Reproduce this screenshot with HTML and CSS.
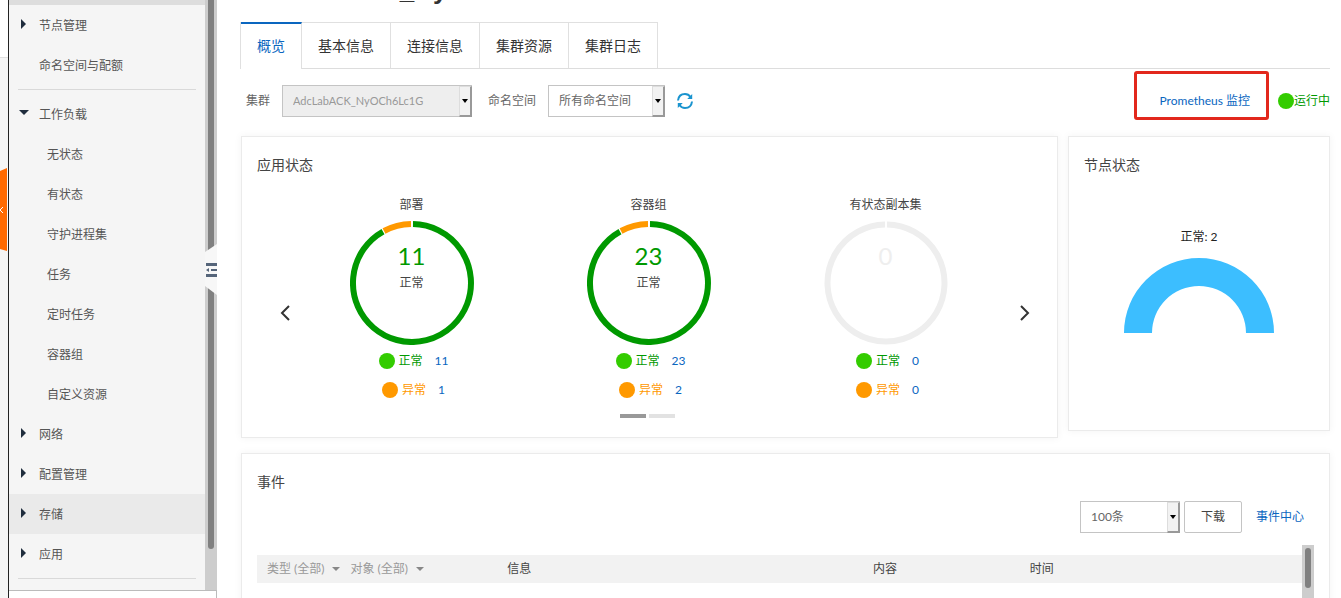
FILE: index.html
```html
<!DOCTYPE html>
<html lang="zh-CN">
<head>
<meta charset="utf-8">
<meta name="viewport" content="width=device-width, initial-scale=1">
<title>集群管理</title>
<link rel="stylesheet" href="styles.css">
</head>
<body>
<div class="shell">
  <div class="rail">
    <button class="rail-tab" type="button" aria-label="展开"><svg width="7" height="8" viewBox="0 0 7 8"><path d="M3 1L0 4l3 3" fill="none" stroke="#fff"/></svg></button>
  </div>
  <aside class="sidebar">
    <nav class="nav">
      <a class="item" href="#"><svg class="caret" viewBox="0 0 10 10"><path d="M2 0l5 5-5 5z"/></svg>节点管理</a>
      <a class="item" href="#"><span class="caret"></span>命名空间与配额</a>
      <hr>
      <a class="item" href="#"><svg class="caret" viewBox="0 0 10 10"><path d="M0 2h10l-5 5z"/></svg>工作负载</a>
      <a class="item sub" href="#">无状态</a>
      <a class="item sub" href="#">有状态</a>
      <a class="item sub" href="#">守护进程集</a>
      <a class="item sub" href="#">任务</a>
      <a class="item sub" href="#">定时任务</a>
      <a class="item sub" href="#">容器组</a>
      <a class="item sub" href="#">自定义资源</a>
      <a class="item" href="#"><svg class="caret" viewBox="0 0 10 10"><path d="M2 0l5 5-5 5z"/></svg>网络</a>
      <a class="item" href="#"><svg class="caret" viewBox="0 0 10 10"><path d="M2 0l5 5-5 5z"/></svg>配置管理</a>
      <a class="item hover" href="#"><svg class="caret" viewBox="0 0 10 10"><path d="M2 0l5 5-5 5z"/></svg>存储</a>
      <a class="item" href="#"><svg class="caret" viewBox="0 0 10 10"><path d="M2 0l5 5-5 5z"/></svg>应用</a>
      <hr>
    </nav>
    <div class="track"><div class="thumb"></div></div>
    <div class="status-strip"></div>
    <button class="collapse" type="button" aria-label="收起菜单"><svg width="11" height="14" viewBox="0 0 11 14"><path d="M0 0h11v3H0zM5 6h6v2H5zM0 11h11v3H0zM3 5v4L0 7z" fill="#56657a"/></svg></button>
  </aside>
  <main class="main">
    <h1 class="title">AdcLabACK_NyOCh6Lc1G</h1>
    <div class="tabs" role="tablist">
      <button class="tab active" type="button" role="tab" aria-selected="true">概览</button>
      <button class="tab" type="button" role="tab">基本信息</button>
      <button class="tab" type="button" role="tab">连接信息</button>
      <button class="tab" type="button" role="tab">集群资源</button>
      <button class="tab" type="button" role="tab">集群日志</button>
    </div>
    <div class="filters">
      <label for="cluster">集群</label>
      <div class="pick pick-cluster">
        <select id="cluster" disabled><option>AdcLabACK_NyOCh6Lc1G</option></select>
        <span class="drop"></span>
      </div>
      <label class="ns" for="namespace">命名空间</label>
      <div class="pick pick-ns">
        <select id="namespace"><option>所有命名空间</option></select>
        <span class="drop"></span>
      </div>
      <button class="refresh" type="button" aria-label="刷新"><svg width="16" height="16" viewBox="0 0 16 16"><g fill="none" stroke="#1a94cf" stroke-width="2"><path d="M1 7.500C1.500 3 4.500 1 8 1c2.500 0 4.300 1.200 5.500 3"/><path d="M15 8.500C14.500 13 11.500 15 8 15c-2.500 0-4.300-1.200-5.500-3"/></g><path d="M15.200 1v5h-5zM.8 15v-5h5z" fill="#1a94cf"/></svg></button>
      <a class="prometheus" href="#">Prometheus 监控</a>
      <span class="running"><i class="dot green"></i>运行中</span>
    </div>

    <div class="cards">
      <section class="card apps">
        <h2>应用状态</h2>
        <div class="carousel">
          <button class="arrow" type="button" aria-label="上一页"><svg width="12" height="18" viewBox="0 0 12 18"><path d="M10 2L3 9l7 7" fill="none" stroke="#333" stroke-width="2"/></svg></button>
          <div class="slides">
            <article class="slide">
              <h3>部署</h3>
              <div class="ring">
                <svg width="124" height="124" viewBox="-62 -62 124 124" fill="none" stroke-width="6"><path d="M1 -59A59 59 0 1 1 -29 -51.400" stroke="#090"/><path d="M-28 -52A59 59 0 0 1 -1 -59" stroke="#f90"/></svg>
                <div class="ring-text"><strong>11</strong><span>正常</span></div>
              </div>
              <p class="legend ok"><i class="dot green"></i>正常<a href="#">11</a></p>
              <p class="legend bad"><i class="dot orange"></i>异常<a href="#">1</a></p>
            </article>
            <article class="slide">
              <h3>容器组</h3>
              <div class="ring">
                <svg width="124" height="124" viewBox="-62 -62 124 124" fill="none" stroke-width="6"><path d="M1 -59A59 59 0 1 1 -29 -51.400" stroke="#090"/><path d="M-28 -52A59 59 0 0 1 -1 -59" stroke="#f90"/></svg>
                <div class="ring-text"><strong>23</strong><span>正常</span></div>
              </div>
              <p class="legend ok"><i class="dot green"></i>正常<a href="#">23</a></p>
              <p class="legend bad"><i class="dot orange"></i>异常<a href="#">2</a></p>
            </article>
            <article class="slide">
              <h3>有状态副本集</h3>
              <div class="ring empty">
                <svg width="124" height="124" viewBox="-62 -62 124 124" fill="none" stroke-width="6"><path d="M1 -58.500A58.500 58.500 0 1 1 -1 -58.500" stroke="#eee"/></svg>
                <div class="ring-text"><strong>0</strong></div>
              </div>
              <p class="legend ok"><i class="dot green"></i>正常<a href="#">0</a></p>
              <p class="legend bad"><i class="dot orange"></i>异常<a href="#">0</a></p>
            </article>
            <div class="pager"><i class="on"></i><i></i></div>
          </div>
          <button class="arrow" type="button" aria-label="下一页"><svg width="12" height="18" viewBox="0 0 12 18"><path d="M2 2l7 7-7 7" fill="none" stroke="#333" stroke-width="2"/></svg></button>
        </div>
      </section>
      <section class="card nodes">
        <h2>节点状态</h2>
        <p class="gauge-label">正常: 2</p>
        <svg class="gauge" width="150" height="75" viewBox="0 0 150 75"><path d="M0 75a75 75 0 0 1 150 0h-28a47 47 0 0 0-94 0z" fill="#3cbeff"/></svg>
      </section>
    </div>

    <section class="card events">
      <h2>事件</h2>
      <div class="toolbar">
        <div class="pick pick-count">
          <select aria-label="条数"><option>100条</option></select>
          <span class="drop"></span>
        </div>
        <button class="download" type="button">下载</button>
        <a href="#">事件中心</a>
      </div>
      <div class="table-area">
        <table>
          <colgroup><col class="c-kind"><col class="c-info"><col class="c-body"><col></colgroup>
          <thead>
            <tr>
              <th><button class="filter" type="button">类型 (全部)</button><button class="filter" type="button">对象 (全部)</button></th>
              <th>信息</th>
              <th>内容</th>
              <th>时间</th>
            </tr>
          </thead>
        </table>
        <div class="track"><div class="thumb"></div></div>
      </div>
    </section>
  </main>
</div>
</body>
</html>
```
FILE: styles.css
```css
* { box-sizing: border-box; }

body {
  margin: 0;
  overflow: hidden;
  background: #fff;
  color: #444;
  font: 12px/20px Lato, "Noto Sans CJK SC", sans-serif;
}

h1, h2, h3, p { margin: 0; font-weight: 400; }
a { color: #0a66bf; text-decoration: none; }
button { margin: 0; padding: 0; border: 0; background: none; color: inherit; font: inherit; cursor: pointer; }
svg { display: block; }

.shell {
  display: grid;
  grid-template-columns: 8px 209px minmax(0, 1fr);
  height: 100vh;
}

.rail {
  display: flex;
  align-items: flex-start;
  padding-top: 168px;
  background: linear-gradient(#fff 57px, #e0e0e0 57px, #e0e0e0 58px, #f5f5f5 58px);
}
.rail-tab {
  display: flex;
  align-items: center;
  width: 7px;
  height: 83px;
  background: #ff6a00;
  clip-path: polygon(0 3px, 100% 0, 100% 100%, 0 81px);
}

.sidebar {
  position: relative;
  display: grid;
  grid-template-columns: minmax(0, 1fr) 12px;
  grid-template-rows: minmax(0, 1fr) 8px;
  min-height: 0;
  border-left: 1px solid #222;
  background: #f5f5f5;
}
.nav { overflow: hidden; border-top: 5px solid #ddd; }
.nav hr { height: 1px; margin: 4px 9px; border: 0; background: #d9d9d9; }
.item {
  display: flex;
  align-items: center;
  gap: 10px;
  height: 40px;
  padding: 2px 0 0 10px;
  color: #555;
}
.item.sub { padding-left: 38px; }
.item.hover { background: #eaeaea; }
.caret { flex: none; width: 10px; height: 10px; margin-bottom: 4px; fill: #1f2d3d; }

.track { padding: 0 3px; background: #cdcdcd; }
.thumb { border-radius: 3px; background: #808080; }
.sidebar .thumb { height: 93%; border-radius: 0 0 3px 3px; }
.status-strip {
  grid-column: 1 / -1;
  border: 1px solid #bbb;
  border-width: 1px 1px 0 0;
  background: #fff;
}
.collapse {
  position: absolute;
  top: 244px;
  right: 0;
  display: flex;
  align-items: center;
  justify-content: flex-end;
  width: 12px;
  height: 51px;
  background: #f7f7f7;
  clip-path: polygon(0 8px, 100% 0, 100% 100%, 0 42px);
}

.main { min-height: 0; padding: 0 11px 0 24px; overflow: hidden; }

.title {
  margin: -22px 0 20px;
  padding-left: 7px;
  color: #333;
  font-family: "Liberation Sans", sans-serif;
  font-size: 26px;
  font-weight: 700;
  line-height: 24px;
}

.tabs { display: flex; border-bottom: 1px solid #ddd; }
.tab {
  height: 46px;
  padding: 0 16px;
  border: 1px solid #e0e0e0;
  border-width: 1px 1px 0 0;
  color: #333;
  font-size: 14px;
}
.tab.active {
  height: 47px;
  margin-bottom: -1px;
  padding-bottom: 2px;
  border-top: 2px solid #0a66bf;
  background: #fff;
  color: #0a66bf;
  box-shadow: -1px 0 #e0e0e0;
}

.filters {
  display: flex;
  align-items: center;
  padding: 16px 0 19px 5px;
  color: #666;
}
.pick { position: relative; height: 32px; }
.pick select {
  width: 100%;
  height: 100%;
  padding: 0 20px 0 10px;
  appearance: none;
  border: 1px solid #c4c4c4;
  border-radius: 0;
  background: #fff;
  color: #666;
  font: inherit;
}
.pick select:disabled { background: #eee; color: #999; font-size: 11px; opacity: 1; }
.drop {
  position: absolute;
  inset: 1px 0 0 auto;
  display: grid;
  place-items: center;
  width: 13px;
  border: 1px solid #ddd;
  border-right: 2px solid #999;
  border-bottom: 2px solid #999;
  background: #f2f2f2;
  pointer-events: none;
}
.drop::before {
  content: "";
  border: 3px solid transparent;
  border-top: 4px solid #000;
  border-bottom: 0;
}
.pick-cluster { width: 190px; margin-left: 12px; }
.ns { margin-left: 16px; }
.pick-ns { width: 117px; margin-left: 12px; }
.refresh { margin-left: 12px; }
.prometheus { position: relative; margin: 0 28px 0 auto; }
.prometheus::after {
  content: "";
  position: absolute;
  inset: -20px -19px -9px -26px;
  border: 3px solid #e2281c;
  border-radius: 3px;
}
.running { display: flex; align-items: center; color: #090; }

.dot { flex: none; width: 16px; height: 16px; border-radius: 50%; }
.green { background: #3c0; }
.orange { background: #f90; }

.cards {
  display: grid;
  grid-template-columns: minmax(0, 1fr) 262px;
  align-items: start;
  gap: 10px;
}
.card {
  padding: 14px 15px 15px;
  border: 1px solid #ebebeb;
  background: #fff;
  box-shadow: 0 0 8px rgba(0, 0, 0, .05);
}
.card h2 { font-size: 14px; line-height: 28px; }

.carousel {
  display: flex;
  align-items: center;
  padding: 16px 9px 0 22px;
}
.arrow { width: 14px; padding-top: 8px; }
.slides {
  display: grid;
  flex: 1;
  grid-template-columns: repeat(3, 1fr);
  margin-right: 15px;
  padding-bottom: 4px;
}
.slide { display: grid; justify-items: center; }
.slide h3 { margin-bottom: 6px; font-size: 12px; line-height: 20px; }
.ring { display: grid; margin-bottom: 6px; }
.ring > * { grid-area: 1 / 1; }
.ring-text {
  display: flex;
  flex-direction: column;
  align-items: center;
  padding-top: 18px;
}
.ring-text strong { color: #090; font-size: 24px; font-weight: 400; line-height: 34px; }
.empty .ring-text strong { color: #eee; }
.legend { display: flex; align-items: center; gap: 4px; margin-bottom: 9px; padding-left: 4px; }
.legend a { margin-left: 8px; }
.ok { color: #090; }
.bad { color: #f90; }
.pager {
  display: flex;
  grid-column: 1 / -1;
  justify-content: center;
  gap: 3px;
  padding: 5px 3px 0 0;
}
.pager i { width: 26px; height: 4px; background: #e2e2e2; }
.pager .on { background: #999; }

.nodes { min-height: 295px; }
.gauge-label { margin: 48px 0 11px; color: #222; text-align: center; }
.gauge { margin: 0 auto; }

.events { margin-top: 15px; padding-bottom: 0; }
.toolbar {
  display: flex;
  align-items: center;
  justify-content: flex-end;
  gap: 4px;
  padding: 5px 10px 12px 0;
}
.toolbar a { margin-left: 10px; }
.pick-count { width: 100px; }
.download { width: 58px; height: 32px; border: 1px solid #c4c4c4; border-radius: 2px; }

.table-area { display: flex; align-items: flex-start; height: 300px; }
.table-area .track { width: 12px; height: 100%; padding-top: 3px; }
.table-area .thumb { height: 40px; }
table {
  flex: 1;
  margin-top: 10px;
  border-collapse: collapse;
  table-layout: fixed;
  background: #f2f2f2;
}
th { height: 28px; padding: 0 10px; font-weight: 400; text-align: left; }
.c-kind { width: 23%; }
.c-info { width: 35%; }
.c-body { width: 15%; }
.filter { display: inline-flex; align-items: center; gap: 8px; margin-right: 10px; color: #999; }
.filter::after {
  content: "";
  border: 4px solid transparent;
  border-top-color: #888;
  border-bottom: 0;
}
```
